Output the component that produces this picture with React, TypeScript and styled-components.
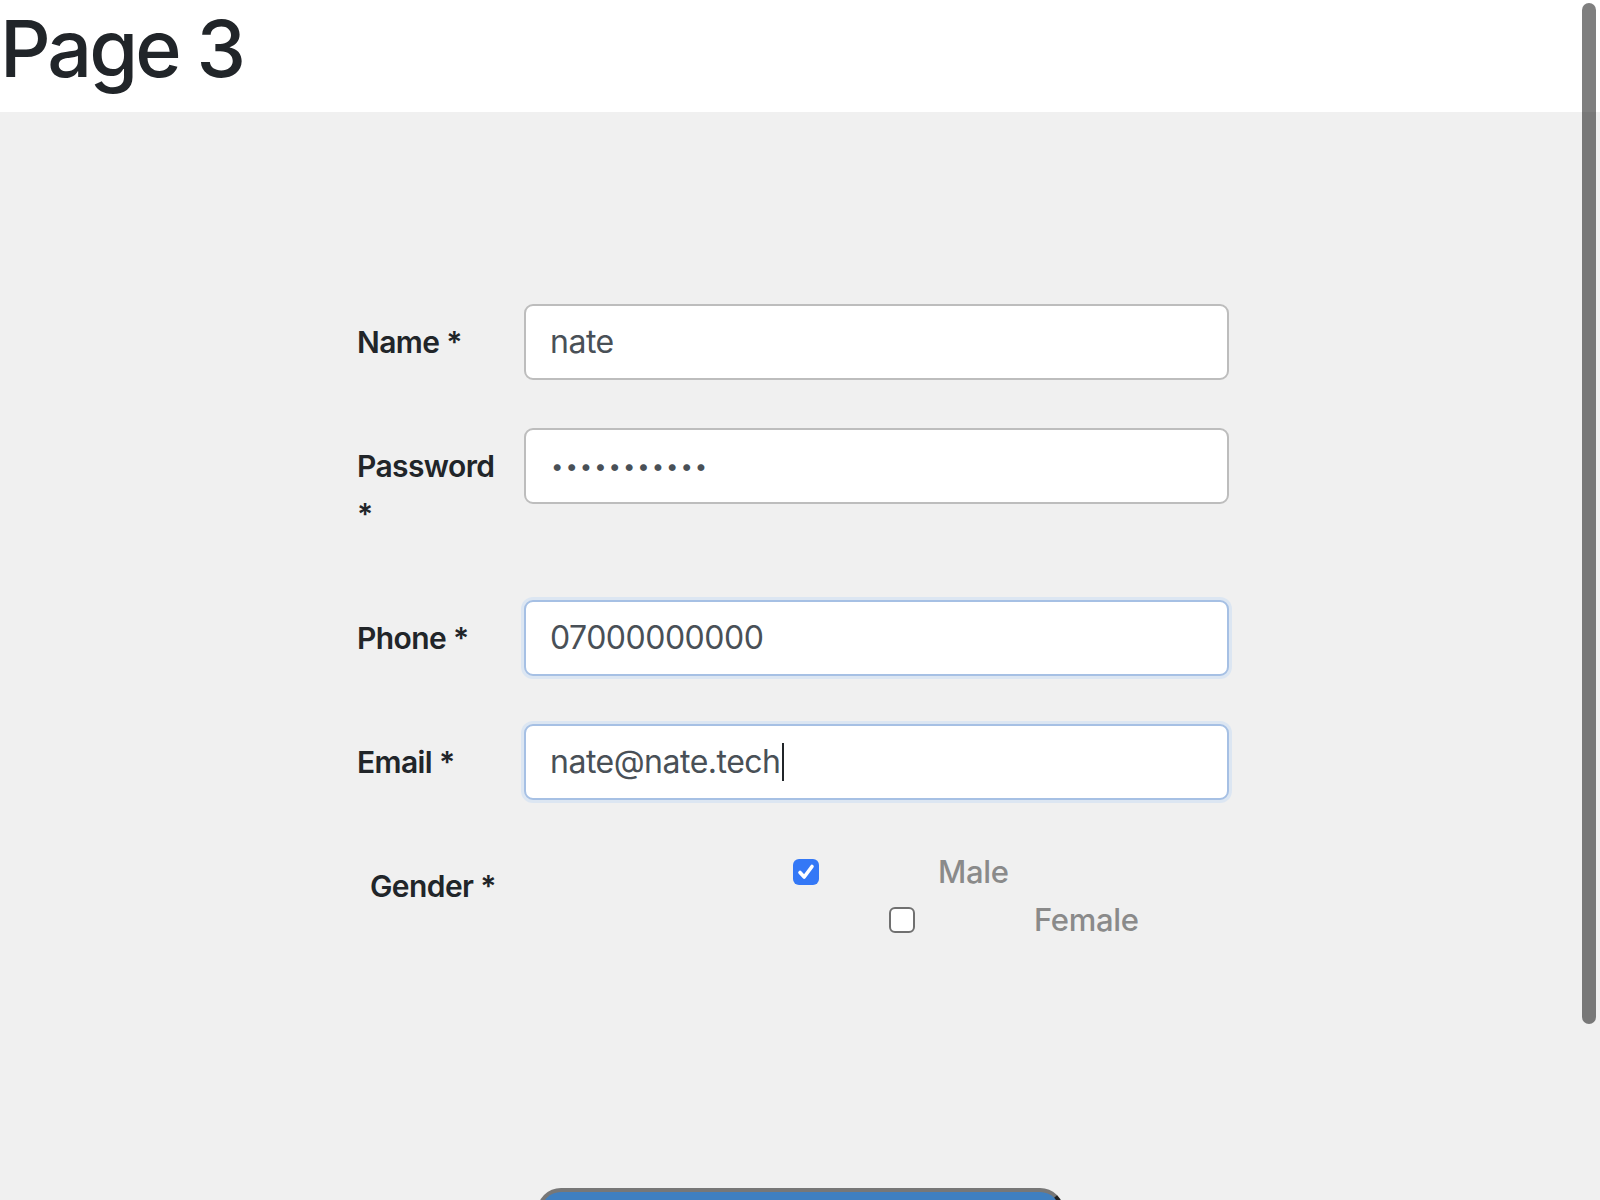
import React from 'react'
import styled, { createGlobalStyle } from 'styled-components'

const GlobalStyle = createGlobalStyle`
  html, body {
    margin: 0;
    overflow: hidden;
    background: #f0f0f0;
    font-family: Inter, "Noto Sans", "Liberation Sans", sans-serif;
    color: #212529;
  }
  * {
    box-sizing: border-box;
  }
`

export default function App() {
  return (
    <>
      <GlobalStyle />
      <Header>
        <Title>Page 3</Title>
      </Header>
      <Main>
        <Form>
          <Row>
            <Label>Name *</Label>
            <Field>
              <Value>nate</Value>
            </Field>
          </Row>
          <Row>
            <Label>Password *</Label>
            <Field>
              <Dots>•••••••••••</Dots>
            </Field>
          </Row>
          <Row>
            <Label>Phone *</Label>
            <Field $focused>
              <Value>07000000000</Value>
            </Field>
          </Row>
          <Row>
            <Label>Email *</Label>
            <Field $focused>
              <Value>nate@nate.tech</Value>
              <Caret />
            </Field>
          </Row>
          <Row>
            <Label $indent={13} $nowrap>Gender *</Label>
            <Options>
              <Option $indent={269}>
                <Checkbox $checked>
                  <svg width="20" height="20" viewBox="0 0 20 20">
                    <path d="M4 10.5 L8.2 15 L16 4.5" fill="none" stroke="#fff" strokeWidth="3.6" strokeLinecap="round" strokeLinejoin="round" />
                  </svg>
                </Checkbox>
                <OptionText>Male</OptionText>
              </Option>
              <Option $indent={365}>
                <Checkbox />
                <OptionText>Female</OptionText>
              </Option>
            </Options>
          </Row>
        </Form>
        <SubmitButton type="button" aria-label="Submit" />
      </Main>
      <ScrollThumb />
    </>
  )
}

const Header = styled.header`
  background: #fff;
`
const Title = styled.h1`
  margin: 0;
  padding-bottom: 16px;
  font-size: 79px;
  font-weight: 500;
  line-height: 96px;
  letter-spacing: -3px;
  color: #212529;
`
const Main = styled.main`
  background: #f0f0f0;
  padding-top: 192px;
  display: flex;
  flex-direction: column;
`
const Form = styled.form`
  margin-left: 357px;
  width: 872px;
`
const Row = styled.div`
  display: grid;
  grid-template-columns: 167px 705px;
  align-items: start;
  margin-bottom: 48px;
`
const Label = styled.label<{ $indent?: number; $nowrap?: boolean }>`
  padding: 14px 16px 14px ${({ $indent }) => $indent || 0}px;
  font-size: 30px;
  line-height: 48px;
  font-weight: 600;
  letter-spacing: -0.6px;
  white-space: ${({ $nowrap }) => ($nowrap ? 'nowrap' : 'normal')};
  color: #212529;
`
const Field = styled.div<{ $focused?: boolean }>`
  display: flex;
  align-items: center;
  height: 76px;
  padding: 12px 24px;
  background: #fff;
  border: 2px solid ${({ $focused }) => ($focused ? '#a6c0e4' : '#bdbdbd')};
  border-radius: 9px;
  box-shadow: ${({ $focused }) => ($focused ? '0 0 0 3px #dce6f2' : 'none')};
  font-size: 32px;
  line-height: 48px;
  color: #495057;
`
const Value = styled.span`
  white-space: nowrap;
  letter-spacing: -0.5px;
`
const Dots = styled.span`
  font-size: 22px;
  letter-spacing: 2px;
  color: #495057;
  padding-left: 1px;
`
const Caret = styled.span`
  display: inline-block;
  width: 2px;
  height: 38px;
  margin-left: 1px;
  background: #212529;
`
const Options = styled.div`
  display: flex;
  flex-direction: column;
`
const Option = styled.div<{ $indent: number }>`
  display: flex;
  align-items: center;
  height: 48px;
  padding-left: ${({ $indent }) => $indent}px;
  gap: 119px;
`
const Checkbox = styled.span<{ $checked?: boolean }>`
  display: flex;
  align-items: center;
  justify-content: center;
  width: 26px;
  height: 26px;
  border-radius: 6px;
  background: ${({ $checked }) => ($checked ? '#3478f6' : '#fff')};
  border: ${({ $checked }) => ($checked ? 'none' : '2px solid #707070')};
`
const OptionText = styled.span`
  font-size: 31px;
  line-height: 48px;
  font-weight: 500;
  letter-spacing: -0.3px;
  color: #8a8a8a;
`
const SubmitButton = styled.button`
  align-self: center;
  margin-top: 196px;
  width: 527px;
  height: 96px;
  flex-shrink: 0;
  background: #3f7fc0;
  border: 4px solid #777;
  border-right-color: #222;
  border-bottom-color: #222;
  border-radius: 24px;
`
const ScrollThumb = styled.div`
  position: fixed;
  top: 3px;
  right: 4px;
  width: 14px;
  height: 1021px;
  border-radius: 7px;
  background: rgba(0, 0, 0, 0.5);
`
